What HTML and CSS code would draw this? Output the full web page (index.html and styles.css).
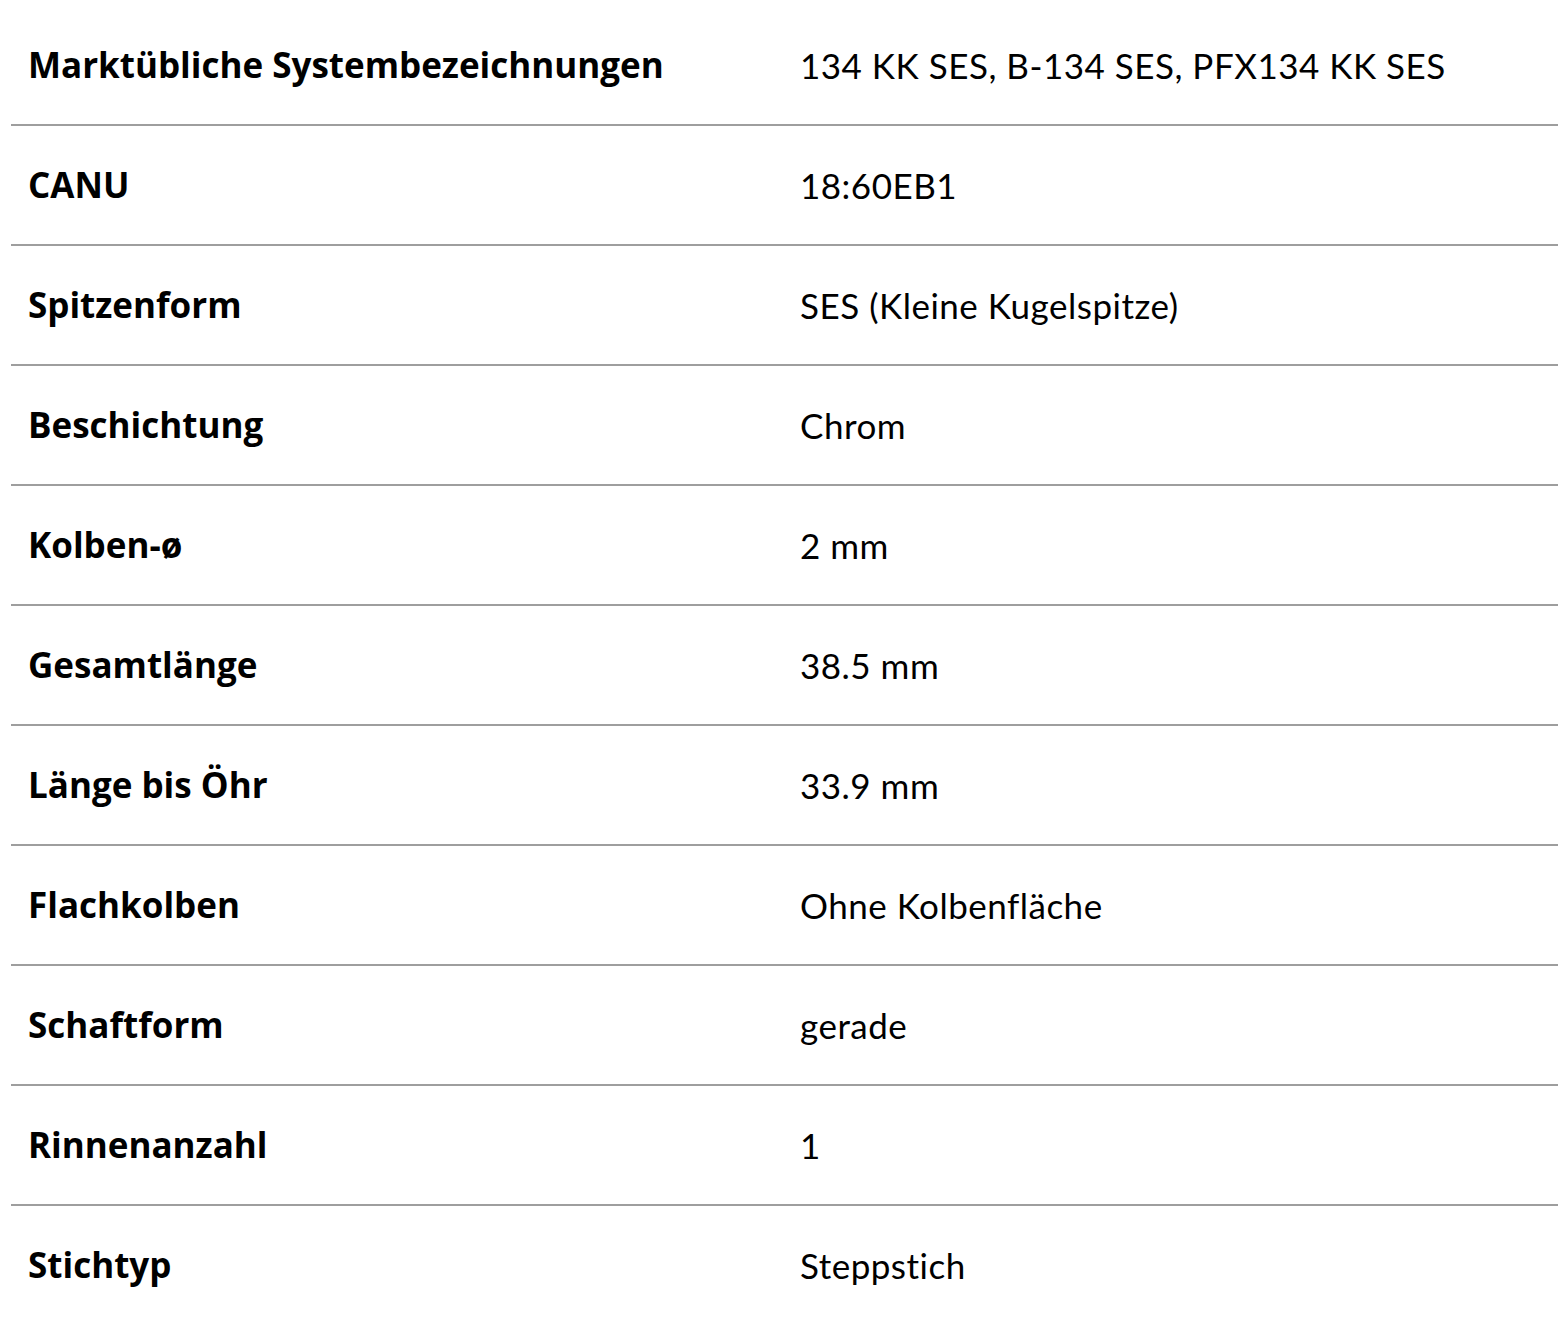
FILE: index.html
```html
<!DOCTYPE html>
<html lang="de">
<head>
<meta charset="utf-8">
<link rel="stylesheet" href="styles.css">
</head>
<body>
<div class="specs">
  <div class="row"><div class="label">Marktübliche Systembezeichnungen</div><div class="value">134 KK SES, B-134 SES, PFX134 KK SES</div></div>
  <div class="row"><div class="label">CANU</div><div class="value">18:60EB1</div></div>
  <div class="row"><div class="label">Spitzenform</div><div class="value">SES (Kleine Kugelspitze)</div></div>
  <div class="row"><div class="label">Beschichtung</div><div class="value">Chrom</div></div>
  <div class="row"><div class="label">Kolben-ø</div><div class="value">2 mm</div></div>
  <div class="row"><div class="label">Gesamtlänge</div><div class="value">38.5 mm</div></div>
  <div class="row"><div class="label">Länge bis Öhr</div><div class="value">33.9 mm</div></div>
  <div class="row"><div class="label">Flachkolben</div><div class="value">Ohne Kolbenfläche</div></div>
  <div class="row"><div class="label">Schaftform</div><div class="value">gerade</div></div>
  <div class="row"><div class="label">Rinnenanzahl</div><div class="value">1</div></div>
  <div class="row last"><div class="label">Stichtyp</div><div class="value">Steppstich</div></div>
</div>
</body>
</html>
```
FILE: styles.css
```css
html, body {
  margin: 0;
  padding: 0;
  background: #ffffff;
}
body {
  font-family: "Lato", "Liberation Sans", sans-serif;
  color: #000000;
}
.specs {
  margin: 6px 0 0 11px;
}
.row {
  display: grid;
  grid-template-columns: 789px 1fr;
  height: 118px;
  align-items: center;
  border-bottom: 2px solid #9e9e9e;
}
.row.last {
  border-bottom: none;
}
.label {
  padding-left: 17px;
  font-family: "Open Sans", "Lato", sans-serif;
  font-weight: 700;
  font-size: 35px;
  line-height: 40px;
}
.value {
  font-size: 35px;
  font-weight: 400;
  letter-spacing: 0.5px;
  line-height: 40px;
}
```
